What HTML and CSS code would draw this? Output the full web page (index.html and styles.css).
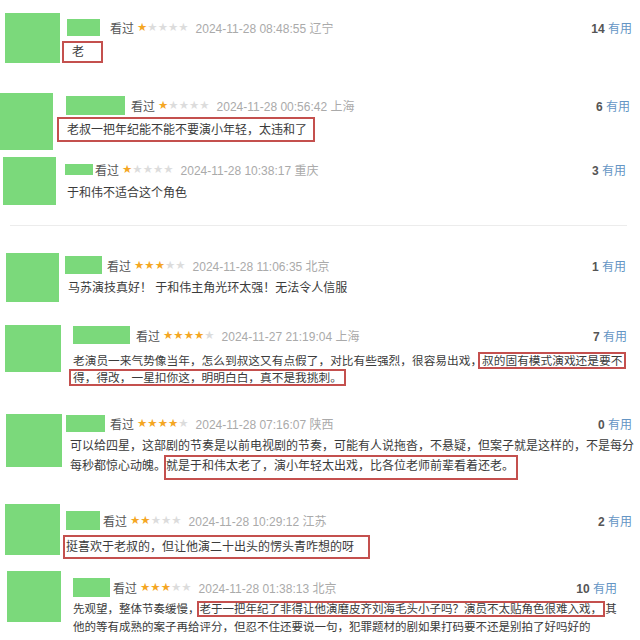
FILE: index.html
```html
<!DOCTYPE html>
<html lang="zh">
<head>
    <meta charset="UTF-8">
    <meta name="viewport" content="width=device-width, initial-scale=1.0">
    <title>短评</title>
    <link rel="stylesheet" href="styles.css">
</head>
<body>
    <div class="feed">

        <div class="comment c1">
            <div class="avatar"></div>
            <div class="main">
                <div class="head">
                    <span class="name"></span>
                    <span class="seen">看过</span>
                    <span class="stars"><span class="lit">★</span>★★★★</span>
                    <span class="time">2024-11-28 08:48:55 辽宁</span>
                    <span class="votes"><b>14</b> 有用</span>
                </div>
                <div class="box">老</div>
            </div>
        </div>

        <div class="comment c2">
            <div class="avatar"></div>
            <div class="main">
                <div class="head">
                    <span class="name"></span>
                    <span class="seen">看过</span>
                    <span class="stars"><span class="lit">★</span>★★★★</span>
                    <span class="time">2024-11-28 00:56:42 上海</span>
                    <span class="votes"><b>6</b> 有用</span>
                </div>
                <div class="box">老叔一把年纪能不能不要演小年轻，太违和了</div>
            </div>
        </div>

        <div class="comment c3">
            <div class="avatar"></div>
            <div class="main">
                <div class="head">
                    <span class="name"></span>
                    <span class="seen">看过</span>
                    <span class="stars"><span class="lit">★</span>★★★★</span>
                    <span class="time">2024-11-28 10:38:17 重庆</span>
                    <span class="votes"><b>3</b> 有用</span>
                </div>
                <p class="text">于和伟不适合这个角色</p>
            </div>
        </div>

        <div class="divider"></div>

        <div class="comment c4">
            <div class="avatar"></div>
            <div class="main">
                <div class="head">
                    <span class="name"></span>
                    <span class="seen">看过</span>
                    <span class="stars"><span class="lit">★★★</span>★★</span>
                    <span class="time">2024-11-28 11:06:35 北京</span>
                    <span class="votes"><b>1</b> 有用</span>
                </div>
                <p class="text">马苏演技真好！ 于和伟主角光环太强！无法令人信服</p>
            </div>
        </div>

        <div class="comment c5">
            <div class="avatar"></div>
            <div class="main">
                <div class="head">
                    <span class="name"></span>
                    <span class="seen">看过</span>
                    <span class="stars"><span class="lit">★★★★</span>★</span>
                    <span class="time">2024-11-27 21:19:04 上海</span>
                    <span class="votes"><b>7</b> 有用</span>
                </div>
                <p class="text">老演员一来气势像当年，怎么到叔这又有点假了，对比有些强烈，很容易出戏，<span class="mark">叔的固有模式演戏还是要不<br>得，得改，一星扣你这，明明白白，真不是我挑刺。</span></p>
            </div>
        </div>

        <div class="comment c6">
            <div class="avatar"></div>
            <div class="main">
                <div class="head">
                    <span class="name"></span>
                    <span class="seen">看过</span>
                    <span class="stars"><span class="lit">★★★★</span>★</span>
                    <span class="time">2024-11-28 07:16:07 陕西</span>
                    <span class="votes"><b>0</b> 有用</span>
                </div>
                <p class="text">可以给四星，这部剧的节奏是以前电视剧的节奏，可能有人说拖沓，不悬疑，但案子就是这样的，不是每分<br>每秒都惊心动魄。<span class="mark">就是于和伟太老了，演小年轻太出戏，比各位老师前辈看着还老。</span></p>
            </div>
        </div>

        <div class="comment c7">
            <div class="avatar"></div>
            <div class="main">
                <div class="head">
                    <span class="name"></span>
                    <span class="seen">看过</span>
                    <span class="stars"><span class="lit">★★</span>★★★</span>
                    <span class="time">2024-11-28 10:29:12 江苏</span>
                    <span class="votes"><b>2</b> 有用</span>
                </div>
                <div class="box">挺喜欢于老叔的，但让他演二十出头的愣头青咋想的呀</div>
            </div>
        </div>

        <div class="comment c8">
            <div class="avatar"></div>
            <div class="main">
                <div class="head">
                    <span class="name"></span>
                    <span class="seen">看过</span>
                    <span class="stars"><span class="lit">★★★</span>★★</span>
                    <span class="time">2024-11-28 01:38:13 北京</span>
                    <span class="votes"><b>10</b> 有用</span>
                </div>
                <p class="text">先观望，整体节奏缓慢，<span class="mark">老于一把年纪了非得让他演磨皮齐刘海毛头小子吗？演员不太贴角色很难入戏，</span> 其<br>他的等有成熟的案子再给评分，但忍不住还要说一句，犯罪题材的剧如果打码要不还是别拍了好吗好的</p>
            </div>
        </div>

    </div>
</body>
</html>
```

FILE: styles.css
```css
body {
    margin: 0;
    background: #fff;
    font-family: "Liberation Sans", "Noto Sans CJK SC", sans-serif;
}
.feed {
    width: 640px;
    height: 640px;
    overflow: hidden;
}
.comment {
    display: flex;
    align-items: flex-start;
    height: var(--h);
    padding-right: var(--pr);
    box-sizing: border-box;
}
.avatar {
    flex: none;
    width: var(--aw);
    height: var(--ah);
    margin: var(--ay) 0 0 var(--ax);
    background: #7bd97b;
}
.main {
    flex: 1;
    min-width: 0;
    margin-left: var(--gap);
}
.head {
    display: flex;
    align-items: center;
    height: 20px;
    margin-top: var(--hy);
    font-size: 12px;
    white-space: nowrap;
}
.name {
    width: var(--nw);
    height: var(--nh);
    background: #7bd97b;
}
.seen {
    margin-left: var(--sg);
    color: #555;
}
.stars {
    margin-left: 3px;
    font-family: "DejaVu Sans", sans-serif;
    font-size: 11.5px;
    color: #dcdcdc;
}
.lit {
    color: #f4a623;
}
.time {
    margin-left: 7px;
    color: #aaa;
}
.votes {
    margin-left: auto;
    color: #6495c4;
}
.votes b {
    color: #555;
}
.text {
    margin: var(--ty) 0 0 var(--tx);
    font-size: 12px;
    line-height: 20px;
    color: #3b3b3b;
    white-space: nowrap;
}
.mark {
    border: 2px solid #c4504e;
    padding: 1px 3px;
    margin: 0 -5px;
    -webkit-box-decoration-break: clone;
    box-decoration-break: clone;
}
.box {
    width: fit-content;
    border: 2px solid #c4504e;
    font-size: 12px;
    line-height: 14px;
    color: #3b3b3b;
    white-space: nowrap;
}
.divider {
    width: 617px;
    margin-left: 10px;
    border-top: 1px solid #ececec;
}

/* each row came from its own screenshot crop, so offsets differ a bit */
.c1 { --h: 80px; --ax: 5px; --ay: 13px; --aw: 55px; --ah: 50px; --gap: 7px; --hy: 17px; --nw: 33px; --nh: 17px; --sg: 10px; --pr: 8px; }
.c1 .box { margin: 4px 0 0 -5px; padding: 2px 17px 2px 8px; }

.c2 { --h: 72px; --ax: 0px; --ay: 13px; --aw: 53px; --ah: 57px; --gap: 13px; --hy: 15px; --nw: 59px; --nh: 19px; --sg: 6px; --pr: 10px; }
.c2 .box { margin: 2px 0 0 -9px; padding: 4px 6px 3px 8px; }

.c3 { --h: 73px; --ax: 3px; --ay: 5px; --aw: 53px; --ah: 48px; --gap: 9px; --hy: 7px; --nw: 28px; --nh: 11px; --sg: 2px; --pr: 14px; --tx: 2px; --ty: 4px; }

.c4 { --h: 92px; --ax: 6px; --ay: 27px; --aw: 53px; --ah: 49px; --gap: 6px; --hy: 29px; --nw: 37px; --nh: 18px; --sg: 5px; --pr: 14px; --tx: 3px; --ty: 3px; }

.c5 { --h: 82px; --ax: 5px; --ay: 7px; --aw: 56px; --ah: 47px; --gap: 12px; --hy: 7px; --nw: 57px; --nh: 18px; --sg: 6px; --pr: 13px; --tx: 0px; --ty: 7px; }
.c5 .text { font-size: 11.7px; line-height: 17px; }
.c5 .mark { padding: 0 2px; margin: 0 -4px; }

.c6 { --h: 95px; --ax: 6px; --ay: 14px; --aw: 56px; --ah: 53px; --gap: 4px; --hy: 13px; --nw: 39px; --nh: 17px; --sg: 5px; --pr: 8px; --tx: 4px; --ty: 3px; }
.c6 .mark { padding: 2px 2px 5px 0; margin: 0 -4px 0 -2px; }

.c7 { --h: 70px; --ax: 5px; --ay: 9px; --aw: 55px; --ah: 51px; --gap: 6px; --hy: 15px; --nw: 34px; --nh: 19px; --sg: 3px; --pr: 8px; }
.c7 .box { margin: 5px 0 0 -3px; padding: 3px 14px 3px 1px; }

.c8 { --h: 75px; --ax: 7px; --ay: 6px; --aw: 54px; --ah: 51px; --gap: 12px; --hy: 12px; --nw: 37px; --nh: 19px; --sg: 3px; --pr: 23px; --tx: 0px; --ty: 3px; }
.c8 .text { font-size: 11.5px; line-height: 18px; }
.c8 .mark { padding: 0 1px; margin: 0 -3px; }
```
